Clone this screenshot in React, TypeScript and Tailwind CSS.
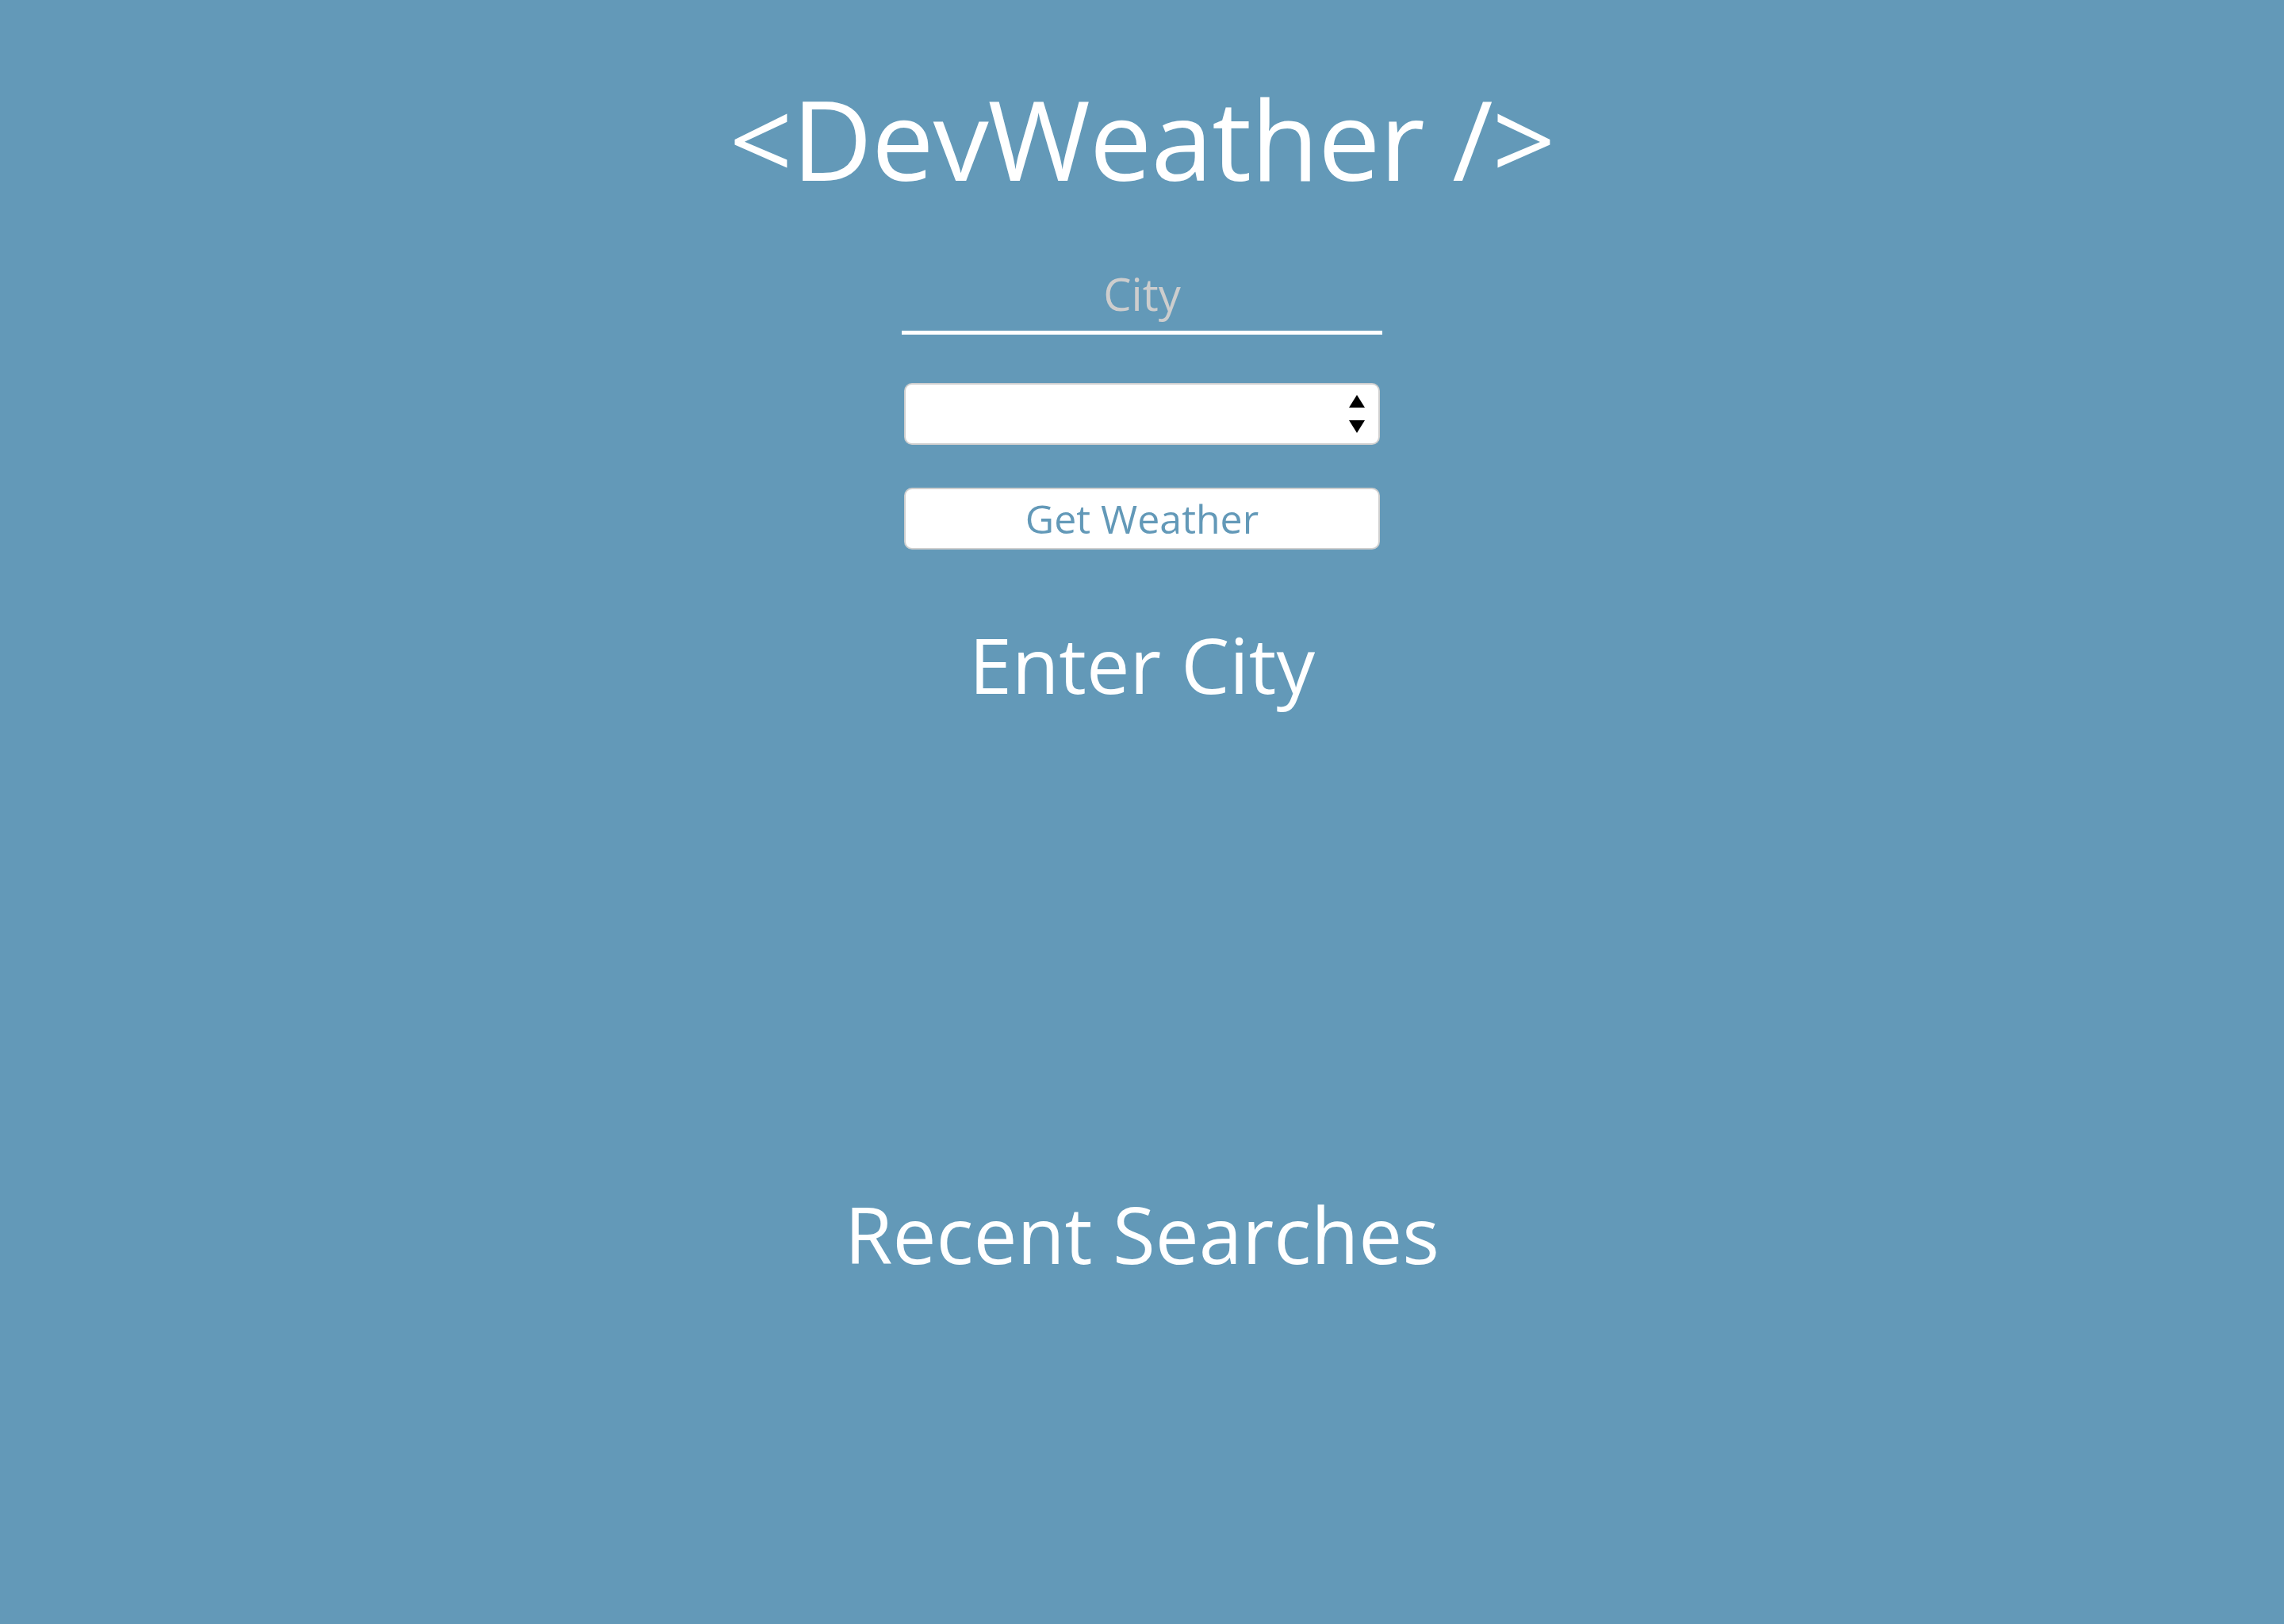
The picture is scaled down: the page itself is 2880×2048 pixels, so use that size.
export default function App() {
  return (
    <div className="min-h-screen w-full bg-[#6399b8] flex flex-col items-center font-['Open_Sans',sans-serif] text-white">
      <h1 className="mt-[104px] text-[140px] leading-none font-normal tracking-[-1px]">
        &lt;DevWeather /&gt;
      </h1>

      <input
        type="text"
        placeholder="City"
        className="mt-[86px] w-[606px] h-[92px] pb-[8px] bg-transparent border-0 border-b-[5px] border-white
                   text-center text-[56px] text-white placeholder:text-[#cdcdcd] outline-none"
      />

      <div className="relative mt-[61px] w-[600px] h-[78px]">
        <select className="w-full h-full appearance-none bg-white border-2 border-[#cfcfcf] rounded-[10px] outline-none" />
        <div className="absolute right-[19px] top-[15px] flex flex-col items-center gap-[16px] pointer-events-none">
          <svg width="20" height="16" viewBox="0 0 20 16">
            <path d="M10 0 L20 16 L0 16 Z" fill="#000" />
          </svg>
          <svg width="20" height="16" viewBox="0 0 20 16">
            <path d="M0 0 L20 0 L10 16 Z" fill="#000" />
          </svg>
        </div>
      </div>

      <button className="mt-[54px] w-[600px] h-[78px] bg-white border-2 border-[#cfcfcf] rounded-[10px]
                         text-[50px] leading-none text-[#6399b8]">
        Get Weather
      </button>

      <h2 className="mt-[96px] text-[97px] leading-none font-normal">Enter City</h2>

      <h2 className="mt-[621px] text-[98px] leading-none font-normal">Recent Searches</h2>
    </div>
  );
}
